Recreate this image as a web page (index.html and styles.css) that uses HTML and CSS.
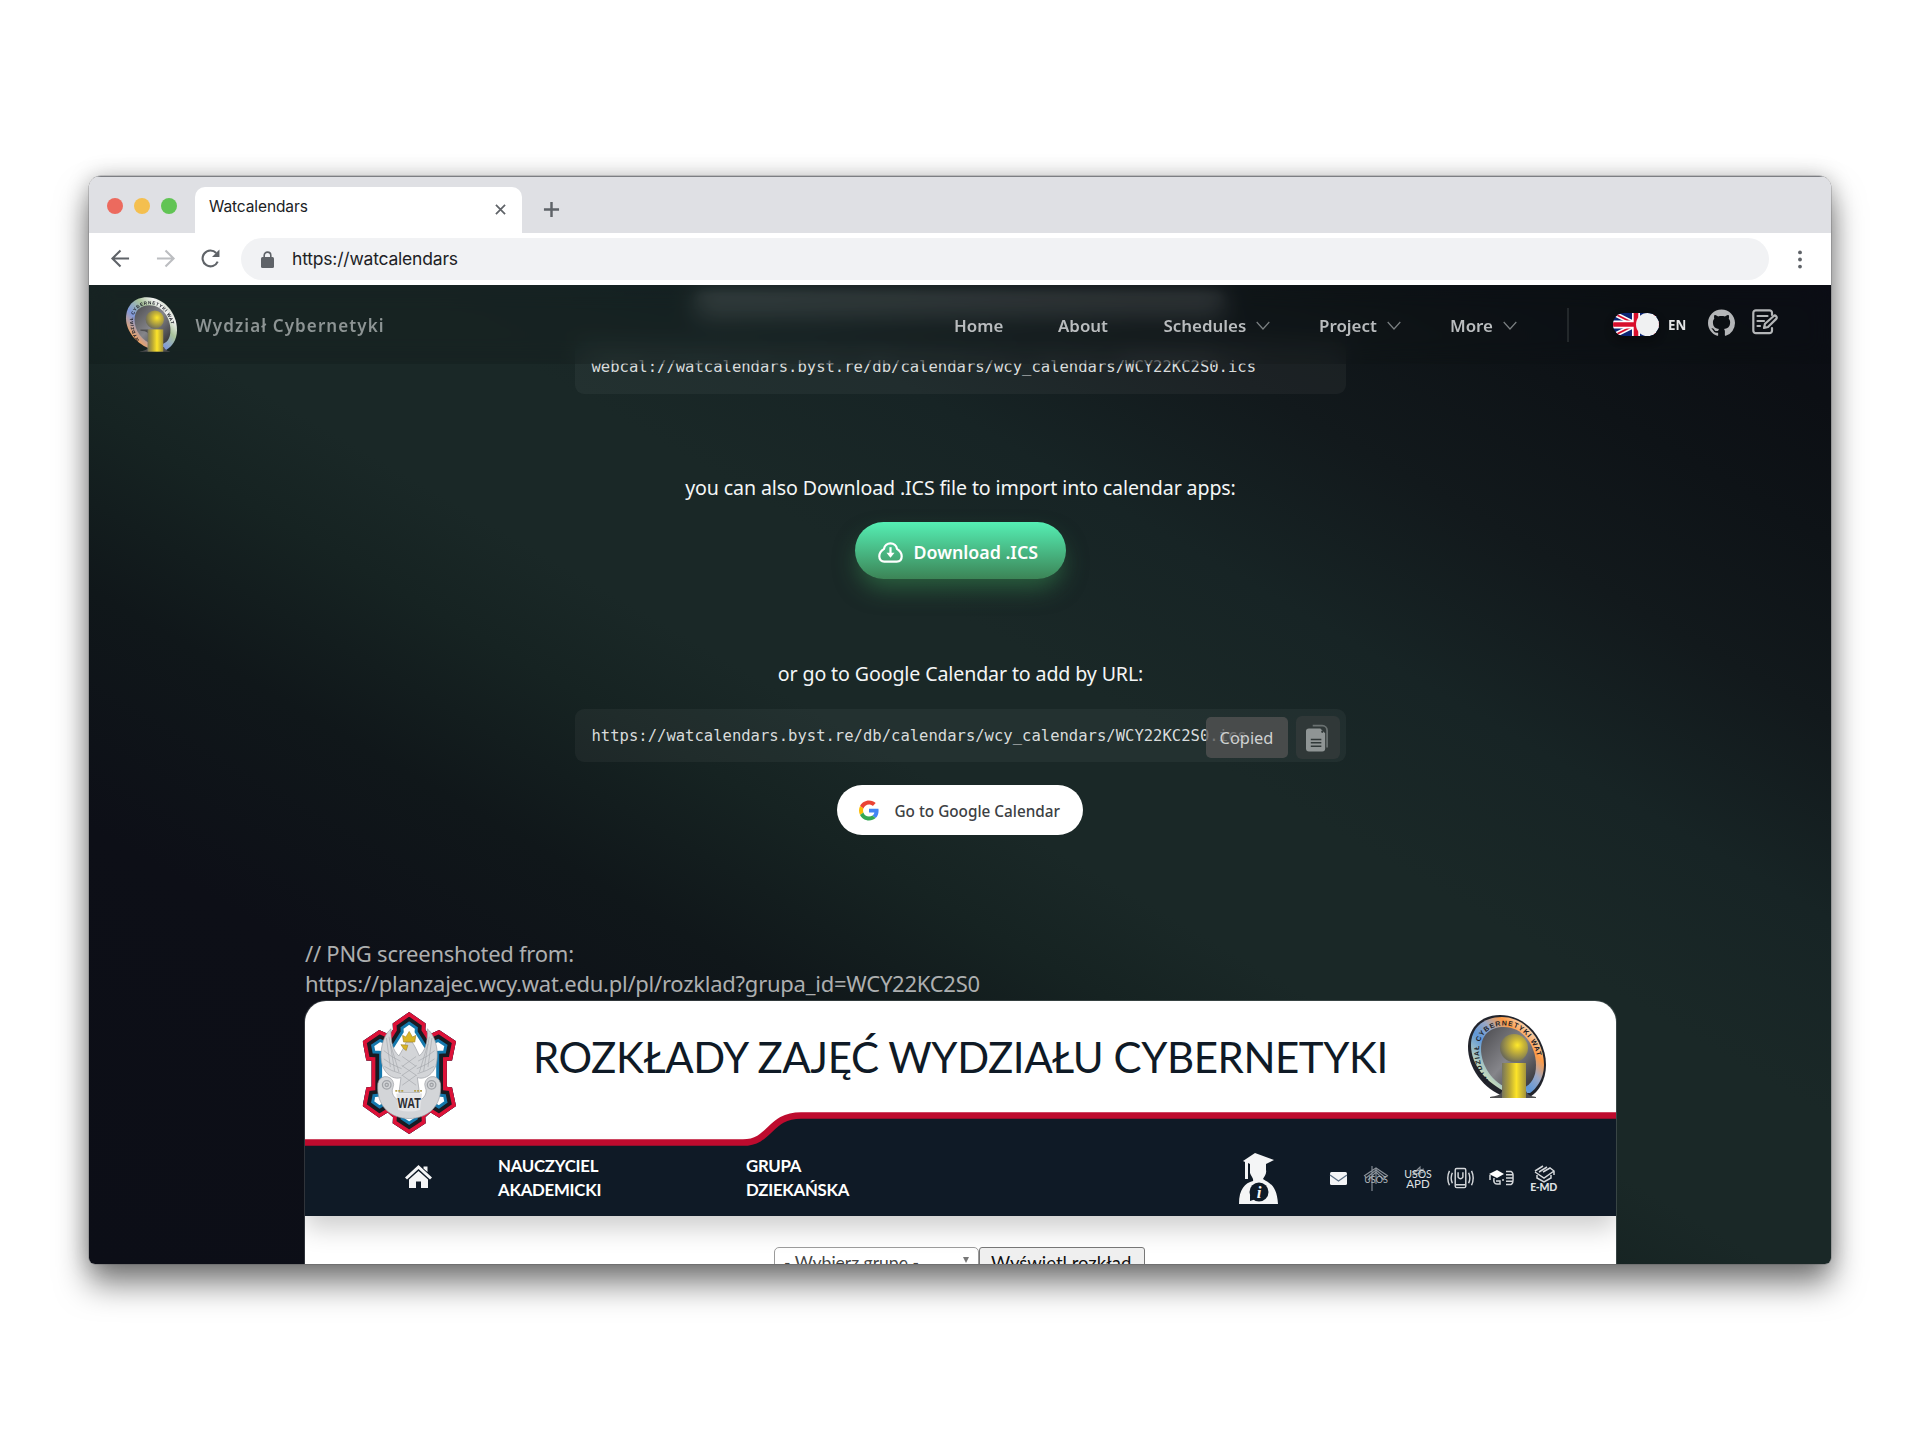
FILE: index.html
```html
<!DOCTYPE html>
<html lang="en">
<head>
<meta charset="utf-8">
<title>Watcalendars</title>
<link rel="stylesheet" href="styles.css">
</head>
<body>
<svg class="defs" width="0" height="0">
  <defs>
    <linearGradient id="ringA" x1="0" y1="1" x2="1" y2="0">
      <stop offset="0" stop-color="#ff9a3c"/><stop offset=".16" stop-color="#ffa552"/><stop offset=".4" stop-color="#7f98dc"/><stop offset=".6" stop-color="#a9c39a"/><stop offset=".75" stop-color="#f2f2f2"/><stop offset="1" stop-color="#a3b98c"/>
    </linearGradient>
    <linearGradient id="ringB" x1="0" y1="1" x2="1" y2="0">
      <stop offset="0" stop-color="#f4f4ee"/><stop offset=".2" stop-color="#c9dcba"/><stop offset=".42" stop-color="#5f97d8"/><stop offset=".56" stop-color="#9aa7c4"/><stop offset=".7" stop-color="#ff9b45"/><stop offset=".85" stop-color="#f5dcc4"/><stop offset="1" stop-color="#ff9b45"/>
    </linearGradient>
    <linearGradient id="discG" x1="0" y1="0" x2="1" y2="1">
      <stop offset="0" stop-color="#4a4a4e"/><stop offset=".5" stop-color="#85858a"/><stop offset="1" stop-color="#2c2c30"/>
    </linearGradient>
    <linearGradient id="stemG">
      <stop offset="0" stop-color="#77755c"/><stop offset=".3" stop-color="#b5a438"/><stop offset=".6" stop-color="#fde428"/><stop offset="1" stop-color="#a2933d"/>
    </linearGradient>
    <radialGradient id="ballG" cx=".62" cy=".4" r=".62">
      <stop offset="0" stop-color="#ffe92b"/><stop offset=".35" stop-color="#cdb936"/><stop offset="1" stop-color="#6f6d58"/>
    </radialGradient>
    <path id="ringText" d="M21 66C13 56 11 44 11 34C11 20 22 10.500 36 10.500C57 10.500 70 32 70 50C70 58 69 62 66 67"/>
    <path id="shieldPath" d="M207 33L257 68L256 86L266 102L298 88L349 122L337 180L321 181V260L337 262L349 318L298 354L272 338L256 352L257 370L207 403L157 370L158 352L142 338L116 354L66 318L77 262L93 260V181L77 180L66 122L116 88L148 102L158 86L157 68Z"/>
    <clipPath id="shield"><use href="#shieldPath"/></clipPath>
  </defs>
</svg>

<main class="window">
  <header class="tabstrip">
    <div class="lights"><i class="red"></i><i class="yellow"></i><i class="green"></i></div>
    <div class="tab">
      <span class="tab-title">Watcalendars</span>
      <svg class="tab-close" viewBox="0 0 12 12"><path d="M1 1L11 11M11 1L1 11"/></svg>
    </div>
    <svg class="tab-plus" viewBox="0 0 18 18"><path d="M9 1V17M1 9H17"/></svg>
  </header>
  <div class="toolbar">
    <svg class="nav-ico" viewBox="0 0 20 20"><path d="M10 1.500L1.500 10L10 18.500M1.500 10H19"/></svg>
    <svg class="nav-ico dim" viewBox="0 0 20 20"><path d="M10 1.500L18.500 10L10 18.500M18.500 10H1"/></svg>
    <svg class="nav-ico" viewBox="0 0 20 20"><path d="M17.600 13.200A8.300 8.300 0 1 1 16 4.200"/><path class="solid" d="M19.400 .6V8.400H11.600Z"/></svg>
    <div class="omnibox">
      <svg class="lock" viewBox="0 0 13 17"><path class="shackle" d="M3.200 7V4.400A3.300 3.300 0 0 1 9.800 4.400V7"/><rect x="0" y="6" width="13" height="11" rx="1.500"/></svg>
      <span class="address">https://watcalendars</span>
    </div>
    <svg class="kebab" viewBox="0 0 4 20"><circle cx="2" cy="2.600" r="2"/><circle cx="2" cy="10" r="2"/><circle cx="2" cy="17.400" r="2"/></svg>
  </div>

  <div class="page">
    <nav class="navbar">
      <svg class="brand-logo" viewBox="0 0 78 83">
        <path fill="url(#ringA)" d="M32 0C58 0 78 24 78 50C78 66 70 75 62 80H40C16 72 0 52 0 32C0 14 12 0 32 0Z"/>
        <path fill="url(#discG)" d="M36 12C56 12 68 32 68 50C68 64 62 70 54 72H42C24 68 13 50 13 34C13 20 22 12 36 12Z"/>
        <text class="ring-label"><textPath href="#ringText">WYDZIAŁ CYBERNETYKI WAT</textPath></text>
        <path fill="#4e4e50" d="M22 49H34V55C32 52 26 51 22 51ZM20 83C28 82 33 80 34 76H58C60 80 62 82 68 83Z"/>
        <path fill="url(#stemG)" d="M33 49H57V83H33Z"/>
        <circle cx="44" cy="34" r="14" fill="url(#ballG)"/>
      </svg>
      <span class="brand">Wydział Cybernetyki</span>
      <ul class="menu">
        <li class="m-home">Home</li>
        <li class="m-about">About</li>
        <li class="m-sched"><span>Schedules</span><svg class="chev" viewBox="0 0 14 9"><path d="M.7 1L7 8L13.300 1"/></svg></li>
        <li class="m-proj"><span>Project</span><svg class="chev" viewBox="0 0 14 9"><path d="M.7 1L7 8L13.300 1"/></svg></li>
        <li class="m-more"><span>More</span><svg class="chev" viewBox="0 0 14 9"><path d="M.7 1L7 8L13.300 1"/></svg></li>
      </ul>
      <span class="divider"></span>
      <span class="switch">
        <svg viewBox="0 0 46 23"><rect width="46" height="23" fill="#0a2472"/><path d="M0 0L46 23M46 0L0 23" stroke="#fff" stroke-width="5"/><path d="M0 0L46 23M46 0L0 23" stroke="#d80f2c" stroke-width="1.600"/><path d="M23 0V23M0 11.500H46" stroke="#fff" stroke-width="8"/><path d="M23 0V23M0 11.500H46" stroke="#d80f2c" stroke-width="4.600"/></svg>
        <i></i>
      </span>
      <span class="lang">EN</span>
      <svg class="github" viewBox="0 0 16 16"><path d="M8 0C3.58 0 0 3.58 0 8c0 3.54 2.29 6.53 5.47 7.59.4.07.55-.17.55-.38 0-.19-.01-.82-.01-1.49-2.01.37-2.53-.49-2.69-.94-.09-.23-.48-.94-.82-1.13-.28-.15-.68-.52-.01-.53.63-.01 1.08.58 1.23.82.72 1.21 1.87.87 2.33.66.07-.52.28-.87.51-1.07-1.78-.2-3.64-.89-3.64-3.95 0-.87.31-1.59.82-2.15-.08-.2-.36-1.02.08-2.12 0 0 .67-.21 2.2.82.64-.18 1.32-.27 2-.27s1.36.09 2 .27c1.53-1.04 2.2-.82 2.2-.82.44 1.1.16 1.92.08 2.12.51.56.82 1.27.82 2.15 0 3.07-1.87 3.75-3.65 3.95.29.25.54.73.54 1.48 0 1.07-.01 1.93-.01 2.2 0 .21.15.46.55.38A8.01 8.01 0 0 0 16 8c0-4.42-3.58-8-8-8z"/></svg>
      <svg class="note" viewBox="0 0 26 26"><path d="M20 6V4A2.600 2.600 0 0 0 17.400 1.300H4A2.600 2.600 0 0 0 1.300 4V21.500A2.600 2.600 0 0 0 4 24.200H17.400A2.600 2.600 0 0 0 20 21.500V19"/><path d="M5.500 7H15.500M5.500 12H12M5.500 17H8"/><path d="M12 19L13 14.800L21.500 7.200A1.900 1.900 0 0 1 24.200 9.900L16 18Z"/></svg>
    </nav>

    <section class="actions">
      <div class="heading-glow"></div>
      <div class="codebox first"><code>webcal://watcalendars.byst.re/db/calendars/wcy_calendars/WCY22KC2S0.ics</code></div>
      <p class="lead l1">you can also Download .ICS file to import into calendar apps:</p>
      <a class="btn-download">
        <svg viewBox="0 0 26 24"><path d="M6.200 9.200A6.900 6.900 0 0 1 19.800 9.200C23.500 11.500 24.700 14 24.700 17C24.700 20.500 22.500 22.600 19.500 22.600H6.500C3.500 22.600 1.300 20.500 1.300 17C1.300 14 2.500 11.500 6.200 9.200Z"/><path d="M13 7.500V15.500"/><path class="solid" d="M8.800 13.200H17.200L13 18.400Z"/></svg>
        <span>Download .ICS</span>
      </a>
      <p class="lead l2">or go to Google Calendar to add by URL:</p>
      <div class="codebox second">
        <code>https://watcalendars.byst.re/db/calendars/wcy_calendars/WCY22KC2S0.ics</code>
        <span class="tooltip">Copied</span>
        <span class="copy"><svg viewBox="0 0 24 28"><path class="back" d="M7 1.200H17A5 5 0 0 1 22 6.200V24"/><path class="sheet" d="M3 4H15L20 9V25A3 3 0 0 1 17 28H3A3 3 0 0 1 0 25V7A3 3 0 0 1 3 4Z"/><path class="rule" d="M5 15.500H16M5 19H16M5 22.500H16"/><circle class="hole" cx="17" cy="7.500" r="1.200"/></svg></span>
      </div>
      <a class="btn-google">
        <svg viewBox="0 0 48 48"><path fill="#EA4335" d="M24 9.500c3.540 0 6.710 1.220 9.210 3.600l6.850-6.850C35.900 2.380 30.470 0 24 0 14.620 0 6.510 5.380 2.560 13.220l7.980 6.190C12.430 13.720 17.740 9.500 24 9.500z"/><path fill="#4285F4" d="M46.980 24.550c0-1.570-.15-3.090-.38-4.550H24v9.020h12.940c-.58 2.960-2.260 5.480-4.780 7.180l7.730 6c4.510-4.180 7.090-10.360 7.090-17.650z"/><path fill="#FBBC05" d="M10.530 28.590c-.48-1.450-.76-2.990-.76-4.590s.27-3.140.76-4.590l-7.980-6.190C.92 16.460 0 20.120 0 24c0 3.880.92 7.540 2.560 10.780l7.970-6.190z"/><path fill="#34A853" d="M24 48c6.480 0 11.930-2.130 15.890-5.810l-7.730-6c-2.150 1.450-4.920 2.300-8.160 2.300-6.260 0-11.570-4.220-13.470-9.910l-7.980 6.190C6.510 42.620 14.620 48 24 48z"/></svg>
        <span>Go to Google Calendar</span>
      </a>
    </section>

    <section class="source">
      <p class="caption">// PNG screenshoted from:<br>https://planzajec.wcy.wat.edu.pl/pl/rozklad?grupa_id=WCY22KC2S0</p>
      <article class="card">
        <div class="card-head">
          <svg class="emblem" viewBox="64 31 288 374">
            <g clip-path="url(#shield)"><use href="#shieldPath" class="s-fill"/><use href="#shieldPath" class="s-blue"/><use href="#shieldPath" class="s-black"/><use href="#shieldPath" class="s-red"/></g>
            <path class="wing" d="M152 84C118 112 116 180 130 205C142 228 164 238 182 232L176 278H238L232 232C250 238 272 228 284 205C298 180 296 112 262 84C264 125 256 150 238 166C230 150 224 135 216 124H198C192 140 184 152 176 166C158 150 150 125 152 84Z"/>
            <path class="feather" d="M138 112L150 200M146 108L163 212M150 130L176 215M276 112L264 200M268 108L251 212M264 130L238 215M186 168L228 198M228 168L186 198M184 195L230 226M230 195L184 226M186 225L228 255M228 225L186 255M130 150Q150 168 180 182M130 175Q150 192 184 205M132 198Q152 212 182 220M284 150Q264 168 234 182M284 175Q264 192 230 205M282 198Q262 212 232 220"/>
            <path class="wing" d="M112 250A24 24 0 1 1 158 262C152 275 158 290 170 298C190 310 224 310 244 298C256 290 262 275 256 262A24 24 0 1 1 302 250C308 320 262 356 207 356C152 356 106 320 112 250Z"/>
            <circle class="curl" cx="139" cy="254" r="13"/><circle class="curl" cx="275" cy="254" r="13"/><circle class="curl" cx="139" cy="254" r="5"/><circle class="curl" cx="275" cy="254" r="5"/>
            <path d="M168 280H246L240 330Q207 340 174 330Z" fill="#e4e5e7"/><path class="claw" d="M165 272H192M222 272H249"/>
            <path class="crown" d="M190 124L187 104L197 109L207 92L217 109L227 104L224 124Z"/><path class="crown" d="M182 132L203 134L198 150L190 144Z"/>
            <text class="wat" x="207" y="325" textLength="70" lengthAdjust="spacingAndGlyphs">WAT</text>
          </svg>
          <h1 class="card-title">ROZKŁADY ZAJĘĆ WYDZIAŁU CYBERNETYKI</h1>
          <svg class="card-logo" viewBox="0 0 78 83">
            <path fill="#22242c" d="M32 0C58 0 78 24 78 50C78 66 70 77 62 82H38C14 74 0 52 0 32C0 14 12 0 32 0Z"/>
            <path fill="url(#ringB)" d="M34 2C58 2 76 26 76 50C76 64 68 74 62 78H40C18 68 3 50 3 30C3 14 14 2 34 2Z"/>
            <path fill="url(#discG)" d="M36 12C56 12 68 32 68 50C68 64 62 70 54 74H42C24 68 13 50 13 34C13 20 22 12 36 12Z"/>
            <text class="ring-label"><textPath href="#ringText">WYDZIAŁ CYBERNETYKI WAT</textPath></text>
            <path fill="#4e4e50" d="M22 82C28 81 33 80 34 76H58C60 80 62 81 68 82V83H22Z"/>
            <path fill="url(#stemG)" d="M34 48H58V83H34Z"/>
            <circle cx="46" cy="33" r="14" fill="url(#ballG)"/>
          </svg>
        </div>
        <svg class="wave" viewBox="0 0 1312 36"><path fill="#0f1a26" d="M0 32H442C470 32 464 5.500 498 5.500H1312V37H0Z"/><path class="wave-line" d="M0 32.500H438C466 32.500 464 5.500 496 5.500H1312"/></svg>
        <div class="card-nav">
          <svg class="home" viewBox="0 0 27 23"><path d="M13.500 0L27 12.500L25 14.500L13.500 4L2 14.500L0 12.500ZM18.500 1.500H22.500V7L18.500 3.500ZM13.500 6L23 14.500V23H16V16.500H11V23H4V14.500Z"/></svg>
          <div class="link k1">NAUCZYCIEL<br>AKADEMICKI</div>
          <div class="link k2">GRUPA<br>DZIEKAŃSKA</div>
          <svg class="student" viewBox="0 0 39 51"><path d="M16 0L35 7L27 11V17C28 21 25 24 24 26C30 30 38 32 39 51H0C0 36 6 30 14 28C15 26 12 23 11 20V11L9 10V26H6V9L4 8Z"/><circle cx="20" cy="39" r="9.500" class="cut"/><path class="cut" d="M11 42V48L17 46Z"/><text x="20" y="45" class="info">i</text></svg>
          <svg class="mail" viewBox="0 0 17 13"><rect width="17" height="13" rx="1.500"/><path d="M0 3L8.500 9L17 3"/></svg>
          <svg class="mini usos" viewBox="0 0 26 26"><path class="roof" d="M1 10L13 2L25 10M3 12L13 4L23 12M5 14L13 6L21 14M9 0V25M13 2V18"/><text x="13" y="16.500">USOS</text></svg>
          <svg class="mini apd" viewBox="0 0 28 26"><path class="roof" d="M10 8L16 2V10M8 7L20 4M8 10L20 7"/><text x="14" y="13">USOS</text><text class="big" x="14" y="23">APD</text></svg>
          <svg class="mini phone" viewBox="0 0 28 24"><rect x="8.500" y="1.500" width="11" height="20" rx="1.500"/><path d="M11.500 5.500V10.500Q14 14 16.500 10.500V5.500M9 18.500H19M5.500 6Q3 11.500 5.500 17M2.500 4Q-1 11.500 2.500 19M22.500 6Q25 11.500 22.500 17M25.500 4Q29 11.500 25.500 19"/></svg>
          <svg class="mini cap" viewBox="0 0 26 16"><path class="f" d="M0 4L8 0L15 4L8 8Z"/><path d="M1 5V10M5 8Q4 14 8 14H11V11H7M13 10H15M17 1.500H22Q24.500 2.500 24 7.500Q24.500 13.500 22 14.500H17M17 4.800H24M17 8H24M17 11.300H24"/></svg>
          <svg class="mini emd" viewBox="0 0 26 26"><path d="M4 6L12 1M4 7L13 13L23 6M8 7L16 2M12 7L19 3L23 6V10M6 10V13L13 17L20 13V10"/><text x="12.500" y="25.500">E-MD</text></svg>
        </div>
        <div class="card-body">
          <span class="select">- Wybierz grupę -<i></i></span><span class="submit">Wyświetl rozkład</span>
        </div>
      </article>
    </section>
  </div>
</main>
</body>
</html>
```
FILE: styles.css
```css
* { box-sizing: border-box; }
body { margin: 0; background: #fff; width: 1920px; height: 1440px; overflow: hidden; padding: 176px 89px 0; font-family: "Noto Sans", sans-serif; }
p, h1, ul { margin: 0; padding: 0; font-weight: 400; }
.defs { position: absolute; }
svg { flex: none; display: block; overflow: visible; }
span, p, h1, li, code { white-space: nowrap; }

.window { width: 1742px; height: 1088px; border-radius: 12px 12px 6px 6px; overflow: hidden; box-shadow: 0 0 0 .5px rgba(60,60,64,.4), 0 20px 32px rgba(0,0,0,.5), 0 0 22px rgba(0,0,0,.22); display: flex; flex-direction: column; background: #fff; }

.tabstrip { height: 57px; background: #dfe0e4; border-top: 1px solid #7c7e83; display: flex; align-items: flex-start; }
.lights { display: flex; gap: 11px; padding: 21px 0 0 17.500px; width: 106px; height: 56px; }
.lights i { width: 16.300px; height: 16.300px; border-radius: 50%; }
.red { background: #ec6a5e; }
.yellow { background: #f4bf4f; }
.green { background: #61c454; }
.tab { width: 327px; height: 47px; margin-top: 10px; background: #fff; border-radius: 10px 10px 0 0; display: flex; justify-content: space-between; padding: 9px 16px 0 14px; }
.tab-title { font: 15.500px/22px Inter, sans-serif; letter-spacing: -.1px; color: #202124; }
.tab-close { width: 11px; height: 11px; margin-top: 8px; stroke: #5f6368; stroke-width: 1.900; }
.tab-plus { width: 17px; height: 17px; margin: 24px 0 0 21px; stroke: #5f6368; stroke-width: 2.600; }

.toolbar { height: 52px; background: #fff; display: flex; align-items: center; padding: 0 29px 0 21.500px; }
.nav-ico { width: 19px; height: 19px; margin-right: 26px; margin-top: -2px; fill: none; stroke: #5f6368; stroke-width: 2.200; }
.nav-ico.dim { stroke: #bcbec1; }
.nav-ico .solid { fill: #5f6368; stroke: none; }
.omnibox { flex: 1; height: 42px; margin-left: -4.500px; border-radius: 21px; background: #f1f2f4; display: flex; align-items: center; padding-left: 20px; }
.lock { width: 13px; height: 17px; fill: #5f6368; }
.lock .shackle { fill: none; stroke: #5f6368; stroke-width: 1.600; }
.address { font: 17.500px/24px Inter, sans-serif; letter-spacing: -.2px; color: #202124; margin-left: 18px; }
.kebab { width: 4px; height: 19px; margin-left: 29px; fill: #5f6368; }

.page { position: relative; flex: 1; overflow: hidden; background: linear-gradient(30deg, #0c0e17 0%, #0d0f17 22%, #10171a 34%, #162322 43%, #1a2827 49%, #1a2827 58%, #172425 68%, #12191c 78%, #0e1317 87%, #0c0f14 94%, #0c0d16 100%); }

.navbar { position: absolute; inset: 0 0 auto 0; z-index: 2; height: 79px; background: rgba(10,14,18,.18); backdrop-filter: blur(12px); display: flex; align-items: center; color: #b9bcbe; }
.brand-logo { width: 51px; height: 55px; margin-left: 37px; }
.ring-label { font: 700 7px "Liberation Sans", sans-serif; fill: #1c1e26; letter-spacing: .9px; }
.brand { font-weight: 600; font-size: 17px; letter-spacing: 1.100px; margin: 2px 0 0 18.500px; width: 190.500px; color: #8d9494; }
.menu { list-style: none; display: flex; flex: none; margin: 2px 0 0 568px; font-size: 16.900px; font-weight: 600; line-height: 24px; width: 613px; }
.menu li { display: flex; align-items: center; gap: 10px; }
.m-home { width: 104px; }
.m-about { width: 105.500px; }
.m-sched { width: 155.500px; }
.m-proj { width: 131px; }
.chev { width: 14px; height: 9px; fill: none; stroke: #7a7f81; stroke-width: 1.200; }
.divider { width: 2px; height: 34px; background: #23282b; }
.switch { position: relative; width: 46px; height: 23px; margin-left: 44px; border-radius: 12px; box-shadow: 0 4px 8px rgba(0,0,0,.4); overflow: hidden; }
.switch svg { width: 46px; height: 23px; }
.switch i { position: absolute; right: 0; top: 0; width: 23px; height: 23px; border-radius: 50%; background: #f0f1f2; }
.lang { font-size: 13.300px; font-weight: 700; color: #e4e5e6; margin: 1px 0 0 9px; width: 32px; }
.github { width: 27px; height: 28px; margin: -4px 0 0 8px; fill: #b4b6b8; }
.note { width: 26px; height: 26px; margin: -5px 0 0 17px; fill: none; stroke: #b4b6b8; stroke-width: 2.200; stroke-linejoin: round; stroke-linecap: round; }

.actions { display: flex; flex-direction: column; align-items: center; }
.heading-glow { width: 530px; height: 22px; margin-top: 8px; border-radius: 8px; background: rgba(255,255,255,.19); filter: blur(3px); }
.codebox { position: relative; width: 771px; height: 53px; border-radius: 9px; background: rgba(255,255,255,.045); display: flex; align-items: center; padding-left: 17px; }
.codebox code { font: 15.550px/24px "DejaVu Sans Mono", monospace; color: #d9dcdc; }
.first { margin-top: 26px; }
.first code { margin-top: -1px; }
.lead { color: #f4f6f6; font-size: 19.600px; letter-spacing: -.12px; line-height: 28px; padding-left: 1px; }
.l1 { margin-top: 79.500px; }
.btn-download { width: 211px; height: 57px; margin-top: 20.500px; border-radius: 28.500px; background: linear-gradient(#55efb4, #3c8456); box-shadow: 0 12px 24px -4px rgba(60,160,90,.5); display: flex; align-items: center; padding: 2px 0 0 23px; color: #fff; font-size: 17.800px; font-weight: 600; }
.btn-download svg { width: 25px; height: 23px; margin-right: 11px; fill: none; stroke: #fff; stroke-width: 2.300; }
.btn-download .solid { fill: #fff; stroke: none; }
.l2 { margin-top: 80.500px; }
.second { margin-top: 21.500px; }
.tooltip { position: absolute; left: 631px; top: 8px; width: 82px; height: 41px; border-radius: 5px; background: rgba(84,84,84,.76); color: #d0d2d2; font-size: 16.400px; line-height: 41px; text-align: center; }
.copy { position: absolute; left: 721px; top: 7px; width: 44px; height: 43px; border-radius: 6px; background: #303838; display: flex; align-items: center; justify-content: center; }
.copy svg { width: 23px; height: 28px; fill: #8f9595; }
.copy .back { fill: none; stroke: #6a7171; stroke-width: 1.800; }
.copy .rule { stroke: #303838; stroke-width: 1.600; }
.copy .hole { fill: #303838; }
.btn-google { width: 246px; height: 50px; margin-top: 23px; border-radius: 25px; background: #fff; display: flex; align-items: center; padding-left: 22px; color: #3c4043; font-size: 15.300px; font-weight: 500; }
.btn-google svg { width: 20px; height: 21px; margin-right: 15.500px; }
.btn-google span { margin-top: 2px; }

.source { width: 1311px; margin: 103px 0 0 216px; }
.caption { font-size: 22px; letter-spacing: -.25px; line-height: 30px; color: #adafb0; }
.card { margin-top: 3px; height: 300px; background: #fff; border-radius: 21px 21px 0 0; overflow: hidden; box-shadow: 0 0 0 1px rgba(130,140,140,.3); }
.card-head { height: 109px; display: flex; align-items: flex-start; }
.emblem { width: 95px; height: 124px; margin: 10px 0 0 56.500px; }
.s-fill { fill: #fff; }
.s-blue, .s-black, .s-red { fill: none; }
.s-blue { stroke: #1579ae; stroke-width: 64px; }
.s-black { stroke: #191b22; stroke-width: 46px; }
.s-red { stroke: #dc1238; stroke-width: 23px; }
.wing { fill: #d3d5d8; stroke: #999ca2; stroke-width: 2px; }
.feather { fill: none; stroke: #a3a6ab; stroke-width: 2px; }
.curl { fill: none; stroke: #a0a3a8; stroke-width: 4px; }
.crown { fill: #d9b526; stroke: #a8892a; stroke-width: 2px; }
.claw { stroke: #b5a04c; stroke-width: 5px; stroke-dasharray: 6 3; }
.wat { font: 700 44px "Liberation Sans", sans-serif; fill: #2c2e33; text-anchor: middle; }
.card-title { width: 857px; margin: 29.500px 0 0 76.500px; font: 400 42px/52px Lato, sans-serif; letter-spacing: -.42px; color: #0f1a26; }
.card-logo { width: 78px; height: 83px; margin: 14px 0 0 78px; }
.wave { position: relative; width: 1312px; height: 36px; }
.wave-line { fill: none; stroke: #be0b2e; stroke-width: 6.600px; }
.card-nav { height: 70px; background: #0f1a26; display: flex; align-items: flex-start; color: #fff; box-shadow: 0 12px 26px rgba(0,0,0,.2); }
.card-nav svg { fill: #f4f5f6; }
.home { width: 27px; height: 23px; margin: 19px 0 0 100px; }
.link { font: 700 16.800px/24.500px Lato, sans-serif; letter-spacing: -.25px; margin-top: 7.500px; }
.k1 { margin-left: 66px; width: 248px; }
.k2 { width: 493px; }
.student { width: 39px; height: 51px; margin-top: 6.500px; }
.card-nav .cut { fill: #0f1a26; }
.info { font: italic 700 17px "Liberation Serif", serif; text-anchor: middle; }
.mail { width: 17px; height: 13px; margin: 26px 0 0 52px; }
.mail path { fill: none; stroke: #5c7085; stroke-width: 1.300; }
.card-nav .mini { fill: none; stroke: #d4d7da; stroke-width: 1.500; }
.mini text { fill: #dfe1e4; stroke: none; font: 400 9px Lato, sans-serif; text-anchor: middle; }
.mini .f { fill: #fff; stroke: none; }
.mini .roof { stroke: #8b929a; stroke-width: 1.100; }
.usos { width: 26px; height: 26px; margin: 20px 0 0 16px; }
.usos text { fill: #b4b9be; }
.apd { width: 28px; height: 26px; margin: 19px 0 0 15px; }
.apd text { font-size: 10.500px; }
.apd .big { font-size: 11.500px; }
.phone { width: 27px; height: 23px; margin: 21px 0 0 15px; }
.cap { width: 26px; height: 16px; margin: 24px 0 0 15px; }
.emd { width: 26px; height: 26px; margin: 19px 0 0 16px; }
.emd text { font: 900 10.500px Lato, sans-serif; letter-spacing: -.3px; }
.card-body { display: flex; padding: 31px 0 0 469px; font: 17.500px/32px Lato, sans-serif; color: #333; }
.select { width: 205px; height: 36px; border: 1px solid #9b9b9b; border-radius: 5px; display: flex; justify-content: space-between; padding: 0 9px 0 9px; line-height: 30px; color: #444; }
.select i { width: 0; height: 0; margin-top: 9px; border: 3.500px solid transparent; border-top: 6px solid #777; border-bottom: 0; }
.submit { width: 166px; height: 36px; border: 1px solid #777; border-radius: 3px; background: #efefef; padding-left: 11px; font-size: 18.500px; line-height: 30px; color: #111; }
```
